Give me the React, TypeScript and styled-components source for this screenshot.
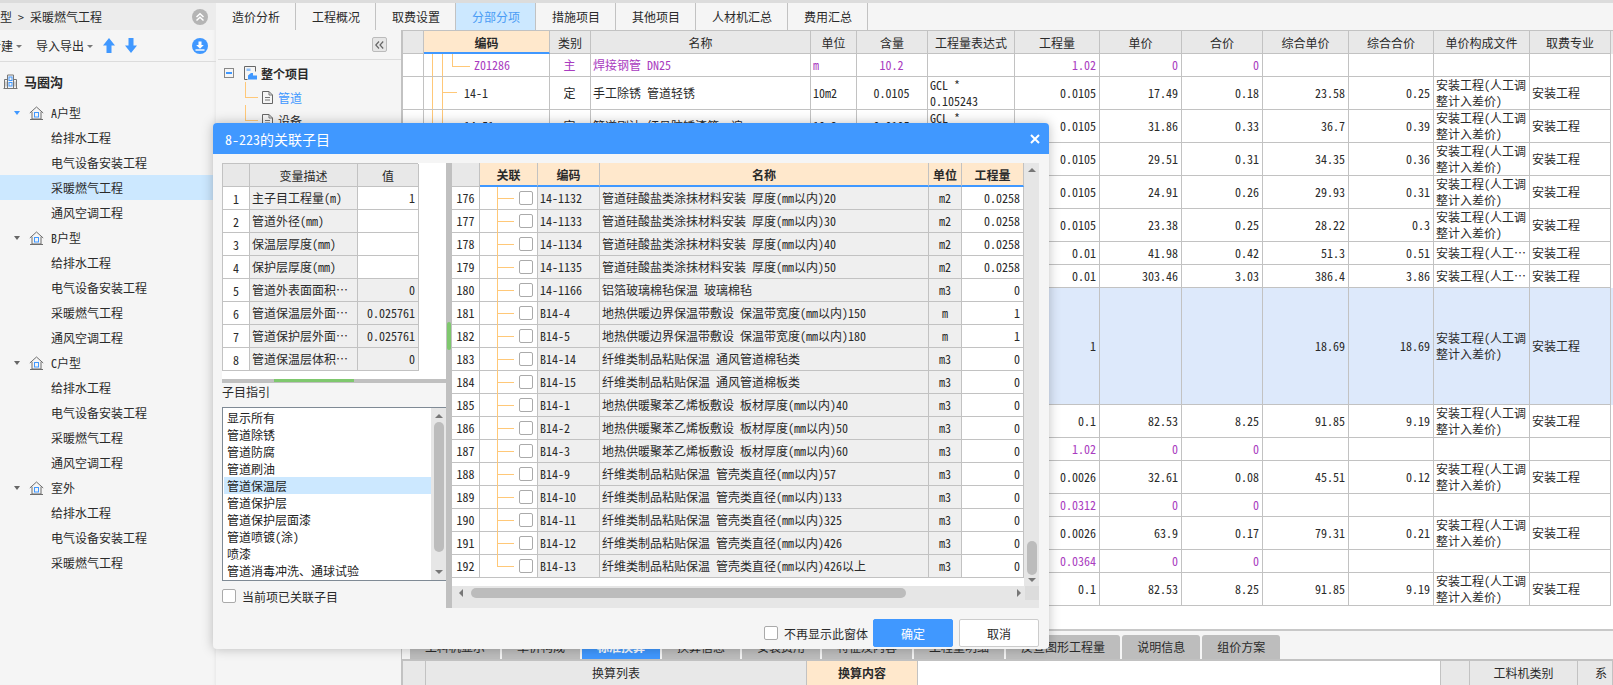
import React from "react"
import styled, { createGlobalStyle } from "styled-components"

const LINE = "#c2c2c2"
const HEAD = "#e8e8e8"
const ORANGE = "#ffe8cc"
const BLUE = "#4098ff"
const GUIDE = "#ffc878"
const PURPLE = "#a93cc0"
const FILE = "安装工程(人工调整计入差价)"
const MAJOR = "安装工程"

const GRID_COLUMNS = "21px 126px 41px 220px 46px 71px 87px 85px 82px 81px 86px 85px 96px 81px"
const VAR_COLUMNS = "27px 108px 61px"
const LINK_COLUMNS = "28px 58px 62px 329px 33px 62px"

const GlobalStyle = createGlobalStyle`
	html, body {
		margin: 0;
		padding: 0;
		background: #f5f5f5;
	}
	body {
		font-family: "Noto Sans CJK SC", "Liberation Sans", sans-serif;
		font-size: 12px;
		font-feature-settings: "hwid";
		color: #2a2a2a;
	}
	* {
		box-sizing: border-box;
	}
`

type GridRow = {
	height: number
	depth?: number
	code?: string
	kind?: string
	name?: string
	unit?: string
	content?: string
	expression?: string
	quantity?: string
	price?: string
	total?: string
	unitAll?: string
	totalAll?: string
	file?: string
	major?: string
	material?: boolean
	active?: boolean
	clip?: boolean
}

const fee = (quantity: string, price: string, total: string, unitAll: string, totalAll: string) => ({
	quantity,
	price,
	total,
	unitAll,
	totalAll,
	file: FILE,
	major: MAJOR
})

const GRID_ROWS: GridRow[] = [
	{ height: 23, depth: 3, code: "Z01286", kind: "主", name: "焊接钢管 DN25", unit: "m", content: "10.2", quantity: "1.02", price: "0", total: "0", material: true },
	{ height: 33, depth: 2, code: "14-1", kind: "定", name: "手工除锈 管道轻锈", unit: "10m2", content: "0.0105", expression: "GCL * 0.105243", ...fee("0.0105", "17.49", "0.18", "23.58", "0.25") },
	{ height: 33, depth: 2, code: "14-51", kind: "定", name: "管道刷油 红丹防锈漆第一遍", unit: "10m2", content: "0.0105", expression: "GCL * 0.105243", ...fee("0.0105", "31.86", "0.33", "36.7", "0.39") },
	{ height: 33, ...fee("0.0105", "29.51", "0.31", "34.35", "0.36") },
	{ height: 33, ...fee("0.0105", "24.91", "0.26", "29.93", "0.31") },
	{ height: 33, ...fee("0.0105", "23.38", "0.25", "28.22", "0.3") },
	{ height: 23, clip: true, ...fee("0.01", "41.98", "0.42", "51.3", "0.51") },
	{ height: 23, clip: true, ...fee("0.01", "303.46", "3.03", "386.4", "3.86") },
	{ height: 117, active: true, ...fee("1", "", "", "18.69", "18.69") },
	{ height: 33, ...fee("0.1", "82.53", "8.25", "91.85", "9.19") },
	{ height: 23, quantity: "1.02", price: "0", total: "0", material: true },
	{ height: 33, ...fee("0.0026", "32.61", "0.08", "45.51", "0.12") },
	{ height: 23, quantity: "0.0312", price: "0", total: "0", material: true },
	{ height: 33, ...fee("0.0026", "63.9", "0.17", "79.31", "0.21") },
	{ height: 23, quantity: "0.0364", price: "0", total: "0", material: true },
	{ height: 33, ...fee("0.1", "82.53", "8.25", "91.85", "9.19") }
]

const GRID_HEADS = ["", "编码", "类别", "名称", "单位", "含量", "工程量表达式", "工程量", "单价", "合价", "综合单价", "综合合价", "单价构成文件", "取费专业"]

const VAR_ROWS = [
	["主子目工程量(m)", "1"],
	["管道外径(mm)", ""],
	["保温层厚度(mm)", ""],
	["保护层厚度(mm)", ""],
	["管道外表面面积…", "0"],
	["管道保温层外面…", "0.025761"],
	["管道保护层外面…", "0.025761"],
	["管道保温层体积…", "0"]
]

const LINK_ROWS = [
	["176", "14-1132", "管道硅酸盐类涂抹材料安装 厚度(mm以内)20", "m2", "0.0258"],
	["177", "14-1133", "管道硅酸盐类涂抹材料安装 厚度(mm以内)30", "m2", "0.0258"],
	["178", "14-1134", "管道硅酸盐类涂抹材料安装 厚度(mm以内)40", "m2", "0.0258"],
	["179", "14-1135", "管道硅酸盐类涂抹材料安装 厚度(mm以内)50", "m2", "0.0258"],
	["180", "14-1166", "铝箔玻璃棉毡保温 玻璃棉毡", "m3", "0"],
	["181", "B14-4", "地热供暖边界保温带敷设 保温带宽度(mm以内)150", "m", "1"],
	["182", "B14-5", "地热供暖边界保温带敷设 保温带宽度(mm以内)180", "m", "1"],
	["183", "B14-14", "纤维类制品粘贴保温 通风管道棉毡类", "m3", "0"],
	["184", "B14-15", "纤维类制品粘贴保温 通风管道棉板类", "m3", "0"],
	["185", "B14-1", "地热供暖聚苯乙烯板敷设 板材厚度(mm以内)40", "m3", "0"],
	["186", "B14-2", "地热供暖聚苯乙烯板敷设 板材厚度(mm以内)50", "m3", "0"],
	["187", "B14-3", "地热供暖聚苯乙烯板敷设 板材厚度(mm以内)60", "m3", "0"],
	["188", "B14-9", "纤维类制品粘贴保温 管壳类直径(mm以内)57", "m3", "0"],
	["189", "B14-10", "纤维类制品粘贴保温 管壳类直径(mm以内)133", "m3", "0"],
	["190", "B14-11", "纤维类制品粘贴保温 管壳类直径(mm以内)325", "m3", "0"],
	["191", "B14-12", "纤维类制品粘贴保温 管壳类直径(mm以内)426", "m3", "0"],
	["192", "B14-13", "纤维类制品粘贴保温 管壳类直径(mm以内)426以上", "m3", "0"]
]

const INDEX_ITEMS = ["显示所有", "管道除锈", "管道防腐", "管道刷油", "管道保温层", "管道保护层", "管道保护层面漆", "管道喷镀(涂)", "喷漆", "管道消毒冲洗、通球试验"]

const TREE = [
	{ name: "A户型", open: true, children: ["给排水工程", "电气设备安装工程", "采暖燃气工程", "通风空调工程"] },
	{ name: "B户型", children: ["给排水工程", "电气设备安装工程", "采暖燃气工程", "通风空调工程"] },
	{ name: "C户型", children: ["给排水工程", "电气设备安装工程", "采暖燃气工程", "通风空调工程"] },
	{ name: "室外", children: ["给排水工程", "电气设备安装工程", "采暖燃气工程"] }
]

const TOP_TABS = ["造价分析", "工程概况", "取费设置", "分部分项", "措施项目", "其他项目", "人材机汇总", "费用汇总"]
const BOTTOM_TABS = ["工料机显示", "单价构成", "标准换算", "换算信息", "安装费用", "特征及内容", "工程量明细", "反查图形工程量", "说明信息", "组价方案"]

function House() {
	return (
		<svg width="15" height="14" viewBox="0 0 15 14" fill="none">
			<path d="M.8 7 7.5 1l6.7 6M3 5.800V13h9V5.800" stroke="#6d6d6d" />
			<path d="M1 13.500h13" stroke="#6d6d6d" />
			<rect x="5.500" y="6.500" width="4" height="4.500" stroke={BLUE} />
		</svg>
	)
}

function Building() {
	return (
		<svg width="15" height="15" viewBox="0 0 15 15" fill="none">
			<path d="M4.500 14V1h6v13M4.500 5.500h-3V14M10.500 5.500h3V14M.5 14.500h14" stroke="#777" />
			<path d="M3 7.500v5M12 7.500v5" stroke="#aaa" />
			<rect x="6" y="3" width="3" height="3.500" stroke={BLUE} />
			<rect x="6" y="8.500" width="3" height="3.500" stroke={BLUE} />
		</svg>
	)
}

function Doc() {
	return (
		<svg width="11" height="13" viewBox="0 0 11 13" fill="none">
			<path d="M.5.500h6.500l3.500 3.500v8.500H.5z" stroke="#666" />
			<path d="M7 .5V4h3.500M3 6.500h5M3 9h5" stroke="#777" />
		</svg>
	)
}

function ProjectIcon() {
	return (
		<svg width="13" height="14" viewBox="0 0 13 14" fill="none">
			<path d="M.5 13.500V.5h11v5M.5 13.500h3" stroke="#666" />
			<rect x="2.500" y="2.500" width="4" height="2.500" fill="#8fc0f8" />
			<path d="M4 13.500V9.500l3-2.500h2v2.500h4v4z" fill={BLUE} />
		</svg>
	)
}

function RoundCollapse() {
	return (
		<svg width="16" height="16" viewBox="0 0 16 16" fill="none">
			<circle cx="8" cy="8" r="8" fill="#b4b4b4" />
			<path d="M4.500 8 8 4.700 11.500 8M4.500 11.500 8 8.200l3.500 3.300" stroke="#fff" strokeWidth="1.500" />
		</svg>
	)
}

function RoundDownload() {
	return (
		<svg width="16" height="16" viewBox="0 0 16 16" fill="none">
			<circle cx="8" cy="8" r="8" fill={BLUE} />
			<path d="M6.500 3.500h3v3.500h2.300L8 10.700 4.200 7h2.300z" fill="#fff" />
			<path d="M3.500 12h9" stroke="#fff" strokeWidth="1.400" />
		</svg>
	)
}

function MoveArrow({ down }: { down?: boolean }) {
	return (
		<svg width="12" height="15" viewBox="0 0 12 15" style={down ? { transform: "rotate(180deg)" } : undefined}>
			<path d="M6 0 12 7.500H8.500V15h-5V7.500H0z" fill={BLUE} />
		</svg>
	)
}

function DoubleLeft() {
	return (
		<svg width="9" height="8" viewBox="0 0 9 8" fill="none">
			<path d="M4 .5.800 4 4 7.500M8.200.5 5 4l3.200 3.500" stroke="#666" strokeWidth="1.200" />
		</svg>
	)
}

function CloseIcon() {
	return (
		<svg width="10" height="10" viewBox="0 0 10 10" fill="none">
			<path d="M1 1l8 8M9 1 1 9" stroke="#fff" strokeWidth="2" />
		</svg>
	)
}

export default function App() {
	return (
		<>
			<GlobalStyle />
			<Page>
				<Sidebar />
				<Main>
					<TabBar>
						{TOP_TABS.map(tab => (
							<TopTab key={tab} $active={tab === "分部分项"}>
								{tab}
							</TopTab>
						))}
					</TabBar>
					<Body>
						<ProjectPanel />
						<Workspace>
							<DataGrid />
							<TabStrip>
								{BOTTOM_TABS.map(tab => (
									<BottomTab key={tab} $active={tab === "标准换算"}>
										{tab}
									</BottomTab>
								))}
							</TabStrip>
							<DetailHeader>
								<DetailCorner />
								<DetailTitle>换算列表</DetailTitle>
								<DetailActive>换算内容</DetailActive>
								<DetailBlank />
								<DetailCorner />
								<DetailTitle>工料机类别</DetailTitle>
								<DetailClipped>系</DetailClipped>
							</DetailHeader>
						</Workspace>
					</Body>
				</Main>
				<LinkDialog />
			</Page>
		</>
	)
}

function Sidebar() {
	return (
		<Side>
			<Crumb>
				<CrumbText>户型 &gt; 采暖燃气工程</CrumbText>
				<RoundCollapse />
			</Crumb>
			<SideTools>
				<ClippedTool>新建</ClippedTool>
				<Caret />
				<ToolLabel>导入导出</ToolLabel>
				<Caret />
				<MoveGroup>
					<MoveArrow />
					<MoveArrow down />
				</MoveGroup>
				<ToolEnd>
					<RoundDownload />
				</ToolEnd>
			</SideTools>
			<TreeRoot>
				<Building />
				<RootName>马圈沟</RootName>
			</TreeRoot>
			{TREE.map(group => (
				<div key={group.name}>
					<GroupRow>
						<Triangle $blue={group.open} />
						<House />
						<GroupName>{group.name}</GroupName>
					</GroupRow>
					{group.children.map(child => (
						<LeafRow key={child} $active={group.open && child === "采暖燃气工程"}>
							{child}
						</LeafRow>
					))}
				</div>
			))}
		</Side>
	)
}

function ProjectPanel() {
	return (
		<Panel>
			<PanelTool>
				<CollapseButton>
					<DoubleLeft />
				</CollapseButton>
			</PanelTool>
			<ProjectRoot>
				<MinusBox />
				<ProjectIcon />
				<strong>整个项目</strong>
			</ProjectRoot>
			<ProjectLeaf $active>
				<LeafGuide />
				<Doc />
				管道
			</ProjectLeaf>
			<ProjectLeaf>
				<LeafGuide />
				<Doc />
				设备
			</ProjectLeaf>
		</Panel>
	)
}

function DataGrid() {
	return (
		<GridWrap>
			<GridLine $height={23} $head>
				{GRID_HEADS.map((head, i) => (
					<HeadCell key={head + i} $current={i === 1}>
						{head}
					</HeadCell>
				))}
			</GridLine>
			{GRID_ROWS.map((row, i) => (
				<GridLine key={i} $height={row.height} $active={row.active} $material={row.material}>
					<Cell />
					<CodeCell>
						{row.depth && <TreeBars />}
						{row.depth === 3 && <BranchDeep />}
						{row.depth === 2 && <BranchFlat />}
						<CodeText $left={row.depth === 3 ? 50 : 40}>{row.code}</CodeText>
					</CodeCell>
					<Cell $center>{row.kind}</Cell>
					<Cell>{row.name}</Cell>
					<Cell>{row.unit}</Cell>
					<Cell $center>{row.content}</Cell>
					<Cell>{row.expression}</Cell>
					<Cell $right>{row.quantity}</Cell>
					<Cell $right>{row.price}</Cell>
					<Cell $right>{row.total}</Cell>
					<Cell $right>{row.unitAll}</Cell>
					<Cell $right>{row.totalAll}</Cell>
					<Cell $clip={row.clip} $tight>
						{row.file}
					</Cell>
					<Cell>{row.major}</Cell>
				</GridLine>
			))}
		</GridWrap>
	)
}

function LinkDialog() {
	return (
		<Dialog>
			<DialogTitle>
				<span>8-223的关联子目</span>
				<CloseIcon />
			</DialogTitle>
			<DialogBody>
				<LeftColumn>
					<VarPanel>
						<VarLine $head>
							<VarHead />
							<VarHead>变量描述</VarHead>
							<VarHead>值</VarHead>
						</VarLine>
						{VAR_ROWS.map(([label, value], i) => (
							<VarLine key={label}>
								<VarIndex>{i + 1}</VarIndex>
								<VarLabel>{label}</VarLabel>
								<VarValue $grey={i > 3}>{value}</VarValue>
							</VarLine>
						))}
					</VarPanel>
					<HSplit>
						<GreenBar />
					</HSplit>
					<IndexLabel>子目指引</IndexLabel>
					<IndexBox>
						<IndexList>
							{INDEX_ITEMS.map(item => (
								<IndexItem key={item} $active={item === "管道保温层"}>
									{item}
								</IndexItem>
							))}
						</IndexList>
						<IndexScroll>
							<ScrollArrow $dir="up" />
							<IndexThumb />
							<ScrollArrow $dir="down" />
						</IndexScroll>
					</IndexBox>
					<CheckLine>
						<Check />
						当前项已关联子目
					</CheckLine>
				</LeftColumn>
				<VSplit>
					<GreenGrip />
				</VSplit>
				<RightColumn>
					<LinkTop>
						<LinkTable>
							<LinkLine $head>
								<LinkHead $plain />
								<LinkHead>关联</LinkHead>
								<LinkHead>编码</LinkHead>
								<LinkHead>名称</LinkHead>
								<LinkHead>单位</LinkHead>
								<LinkHead>工程量</LinkHead>
							</LinkLine>
							{LINK_ROWS.map(([no, code, name, unit, value], i) => (
								<LinkLine key={no}>
									<LinkCell $center $white>
										{no}
									</LinkCell>
									<LinkCheckCell $last={i === LINK_ROWS.length - 1}>
										<Check />
									</LinkCheckCell>
									<LinkCell>{code}</LinkCell>
									<LinkCell>{name}</LinkCell>
									<LinkCell $center>{unit}</LinkCell>
									<LinkCell $right $white>
										{value}
									</LinkCell>
								</LinkLine>
							))}
						</LinkTable>
						<VScroll>
							<ScrollArrow $dir="up" />
							<VThumb />
							<ScrollArrow $dir="down" />
						</VScroll>
					</LinkTop>
					<HScroll>
						<ScrollArrow $dir="left" />
						<HThumb />
						<ScrollArrow $dir="right" />
						<ScrollCorner />
					</HScroll>
				</RightColumn>
			</DialogBody>
			<DialogFooter>
				<FooterCheck>
					<Check />
					不再显示此窗体
				</FooterCheck>
				<PrimaryButton>确定</PrimaryButton>
				<PlainButton>取消</PlainButton>
			</DialogFooter>
		</Dialog>
	)
}

const Page = styled.div`
	position: relative;
	display: flex;
	width: 1613px;
	height: 685px;
	overflow: hidden;
	background: #f5f5f5;
`

const Side = styled.aside`
	flex: 0 0 216px;
	border-top: 3px solid #dcdcdc;
	box-shadow: inset -3px 0 3px -2px #e6e6e6;
`

const Crumb = styled.div`
	display: flex;
	align-items: center;
	height: 27px;
	padding-right: 8px;
	background: #ececec;
`

const CrumbText = styled.div`
	flex: 1;
	margin-left: -12px;
	white-space: pre;
`

const SideTools = styled.div`
	display: flex;
	align-items: center;
	height: 32px;
	padding-right: 8px;
	border-bottom: 1px solid #dcdcdc;
`

const ClippedTool = styled.span`
	margin-left: -11px;
`

const ToolLabel = styled.span`
	margin-left: 14px;
`

const Caret = styled.i`
	width: 0;
	height: 0;
	margin: 2px 0 0 3px;
	border: 3px solid transparent;
	border-top: 3px solid #777;
	border-bottom: 0;
`

const MoveGroup = styled.div`
	display: flex;
	gap: 10px;
	margin-left: 10px;
`

const ToolEnd = styled.div`
	display: flex;
	margin-left: auto;
`

const TreeRoot = styled.div`
	display: flex;
	align-items: center;
	gap: 6px;
	height: 38px;
	padding-left: 3px;
`

const RootName = styled.strong`
	font-size: 13px;
`

const GroupRow = styled.div`
	display: flex;
	align-items: center;
	height: 25px;
	padding-left: 14px;
	gap: 9px;
`

const GroupName = styled.span`
	margin-left: -2px;
`

const Triangle = styled.i<{ $blue?: boolean }>`
	width: 0;
	height: 0;
	border: 3.500px solid transparent;
	border-top: 4px solid ${p => (p.$blue ? BLUE : "#666")};
	border-bottom: 0;
`

const LeafRow = styled.div<{ $active?: boolean }>`
	height: 25px;
	padding-left: 51px;
	line-height: 25px;
	background: ${p => (p.$active ? "#cce8ff" : "transparent")};
`

const Main = styled.main`
	flex: 1;
	display: flex;
	flex-direction: column;
	min-width: 0;
`

const TabBar = styled.nav`
	display: flex;
	flex: 0 0 30px;
	border-top: 3px solid #dcdcdc;
	background: #f5f5f5;
`

const TopTab = styled.div<{ $active?: boolean }>`
	padding: 0 15px 0 16px;
	line-height: 27px;
	border-right: 1px solid ${LINE};
	background: ${p => (p.$active ? "#cce8ff" : "#f5f5f5")};
	color: ${p => (p.$active ? "#4a9cf5" : "#2a2a2a")};
`

const Body = styled.div`
	flex: 1;
	display: flex;
	min-height: 0;
`

const Panel = styled.section`
	flex: 0 0 186px;
	border-right: 1px solid ${LINE};
`

const PanelTool = styled.div`
	display: flex;
	justify-content: flex-end;
	height: 30px;
	margin-left: 2px;
	padding: 7px 14px 0 0;
	border-bottom: 1px solid #dcdcdc;
`

const CollapseButton = styled.div`
	display: flex;
	align-items: center;
	justify-content: center;
	width: 15px;
	height: 15px;
	border: 1px solid #bbb;
	border-radius: 2px;
	background: #e6e6e6;
`

const ProjectRoot = styled.div`
	display: flex;
	align-items: center;
	height: 26px;
	padding-left: 8px;
	gap: 10px;
	strong {
		margin-left: -6px;
	}
`

const MinusBox = styled.i`
	position: relative;
	width: 10px;
	height: 10px;
	border: 1px solid #888;
	&::after {
		content: "";
		position: absolute;
		left: 1px;
		top: 3px;
		width: 6px;
		height: 2px;
		background: ${BLUE};
	}
`

const ProjectLeaf = styled.div<{ $active?: boolean }>`
	position: relative;
	display: flex;
	align-items: center;
	gap: 5px;
	height: 23px;
	padding-left: 46px;
	color: ${p => (p.$active ? BLUE : "#2a2a2a")};
`

const LeafGuide = styled.i`
	position: absolute;
	left: 29px;
	top: -4px;
	width: 13px;
	height: 16px;
	border-left: 1px solid ${GUIDE};
	border-bottom: 1px solid ${GUIDE};
`

const Workspace = styled.section`
	flex: 1;
	display: flex;
	flex-direction: column;
	min-width: 0;
`

const GridWrap = styled.div`
	flex: 0 0 601px;
	border-top: 1px solid ${LINE};
	border-bottom: 2px solid #c8c8c8;
	background: #fff;
`

const GridLine = styled.div<{ $height: number; $head?: boolean; $active?: boolean; $material?: boolean }>`
	display: grid;
	grid-template-columns: ${GRID_COLUMNS};
	height: ${p => p.$height}px;
	background: ${p => (p.$active ? "#dde9fb" : p.$head ? HEAD : "#fff")};
	color: ${p => (p.$material ? PURPLE : "#2a2a2a")};
	border-left: 1px solid ${LINE};
`

const Cell = styled.div<{ $center?: boolean; $right?: boolean; $clip?: boolean; $tight?: boolean }>`
	display: ${p => (p.$clip ? "block" : "flex")};
	align-items: center;
	justify-content: ${p => (p.$center ? "center" : p.$right ? "flex-end" : "flex-start")};
	padding: 0 ${p => (p.$tight ? 1 : 3)}px 0 2px;
	border-right: 1px solid ${LINE};
	border-bottom: 1px solid ${LINE};
	line-height: ${p => (p.$clip ? "22px" : "16px")};
	white-space: ${p => (p.$clip ? "nowrap" : "pre-wrap")};
	overflow: hidden;
	text-overflow: ${p => (p.$clip ? "ellipsis" : "clip")};
`

const HeadCell = styled.div<{ $current?: boolean }>`
	display: flex;
	align-items: center;
	justify-content: center;
	padding-top: 1px;
	border-right: 1px solid ${LINE};
	border-bottom: ${p => (p.$current ? `2px solid ${BLUE}` : `1px solid ${LINE}`)};
	background: ${p => (p.$current ? ORANGE : HEAD)};
	font-weight: ${p => (p.$current ? 700 : 400)};
`

const CodeCell = styled(Cell)`
	position: relative;
	padding: 0;
`

const TreeBars = styled.i`
	position: absolute;
	left: 8px;
	top: 0;
	bottom: -1px;
	width: 11px;
	border-left: 1px solid ${GUIDE};
	border-right: 1px solid ${GUIDE};
`

const BranchDeep = styled.i`
	position: absolute;
	left: 28px;
	top: 0;
	width: 18px;
	height: 13px;
	border-left: 1px solid ${GUIDE};
	border-bottom: 1px solid ${GUIDE};
`

const BranchFlat = styled.i`
	position: absolute;
	left: 18px;
	top: 15px;
	width: 15px;
	height: 1px;
	background: ${GUIDE};
`

const CodeText = styled.span<{ $left: number }>`
	padding-left: ${p => p.$left}px;
`

const TabStrip = styled.div`
	display: flex;
	flex: 0 0 30px;
	gap: 2px;
	padding: 4px 0 0 8px;
	border-bottom: 2px solid ${LINE};
`

const BottomTab = styled.div<{ $active?: boolean }>`
	padding: 0 15px;
	line-height: 24px;
	border-radius: 3px 3px 0 0;
	background: ${p => (p.$active ? BLUE : "#bdbdbd")};
	color: ${p => (p.$active ? "#fff" : "#2a2a2a")};
	font-weight: ${p => (p.$active ? 700 : 400)};
`

const DetailHeader = styled.div`
	display: grid;
	grid-template-columns: 24px 381px 111px 522px 30px 108px 1fr;
	flex: 1;
	background: #fff;
`

const DetailCorner = styled.div`
	background: ${HEAD};
	border-left: 1px solid ${LINE};
	border-right: 1px solid ${LINE};
`

const DetailTitle = styled.div`
	padding-top: 3px;
	text-align: center;
	background: ${HEAD};
	border-right: 1px solid ${LINE};
`

const DetailActive = styled(DetailTitle)`
	background: ${ORANGE};
	font-weight: 700;
`

const DetailClipped = styled(DetailTitle)`
	padding-left: 17px;
	text-align: left;
`

const DetailBlank = styled.div``

const Dialog = styled.div`
	position: absolute;
	left: 213px;
	top: 123px;
	display: flex;
	flex-direction: column;
	width: 836px;
	height: 526px;
	border-radius: 4px;
	overflow: hidden;
	background: #f5f5f5;
	box-shadow: 0 0 12px rgba(0, 0, 0, 0.25);
`

const DialogTitle = styled.header`
	display: flex;
	align-items: center;
	justify-content: space-between;
	flex: 0 0 31px;
	padding: 0 9px 0 12px;
	background: ${BLUE};
	color: #fff;
	font-size: 14px;
`

const DialogBody = styled.div`
	display: flex;
	padding: 9px 10px 0 9px;
`

const LeftColumn = styled.div`
	flex: 0 0 225px;
`

const VarPanel = styled.div`
	height: 216px;
	background: #fff;
`

const VarLine = styled.div<{ $head?: boolean }>`
	display: grid;
	grid-template-columns: ${VAR_COLUMNS};
	width: 196px;
	height: ${p => (p.$head ? 24 : 23)}px;
	border-left: 1px solid ${LINE};
	border-top: ${p => (p.$head ? `1px solid ${LINE}` : "0")};
`

const VarHead = styled.div`
	display: flex;
	align-items: center;
	justify-content: center;
	background: ${HEAD};
	border-right: 1px solid ${LINE};
	border-bottom: 1px solid ${LINE};
`

const VarIndex = styled(VarHead)`
	background: #fff;
`

const VarLabel = styled.div`
	padding-left: 2px;
	line-height: 22px;
	background: #efefef;
	border-right: 1px solid ${LINE};
	border-bottom: 1px solid ${LINE};
	white-space: nowrap;
	overflow: hidden;
`

const VarValue = styled.div<{ $grey?: boolean }>`
	padding-right: 3px;
	line-height: 22px;
	text-align: right;
	background: ${p => (p.$grey ? "#efefef" : "#fff")};
	border-right: 1px solid ${LINE};
	border-bottom: 1px solid ${LINE};
`

const HSplit = styled.div`
	height: 4px;
	background: #c0c0c0;
`

const GreenBar = styled.div`
	width: 80px;
	height: 3px;
	margin-left: 52px;
	background: #7fc86e;
`

const IndexLabel = styled.div`
	height: 24px;
	line-height: 17px;
`

const IndexBox = styled.div`
	display: flex;
	height: 174px;
	border: 1px solid #7f8a95;
	background: #fff;
`

const IndexList = styled.div`
	flex: 1;
	padding: 1px 0 0 1px;
`

const IndexItem = styled.div<{ $active?: boolean }>`
	height: 17px;
	padding-left: 3px;
	line-height: 17px;
	white-space: nowrap;
	background: ${p => (p.$active ? "#cce8ff" : "transparent")};
	color: #222;
`

const IndexScroll = styled.div`
	display: flex;
	flex-direction: column;
	align-items: center;
	flex: 0 0 15px;
	padding: 6px 0;
	background: #e6e6e6;
`

const IndexThumb = styled.div`
	width: 10px;
	height: 130px;
	margin: 4px 0 auto;
	border-radius: 5px;
	background: #bcbcbc;
`

const CheckLine = styled.label`
	display: flex;
	align-items: center;
	gap: 6px;
	height: 27px;
	padding-top: 3px;
`

const Check = styled.i`
	display: block;
	flex: 0 0 14px;
	width: 14px;
	height: 14px;
	border: 1px solid #aaa;
	border-radius: 2px;
	background: #fff;
`

const VSplit = styled.div`
	flex: 0 0 6px;
	margin-left: -1px;
	padding-top: 159px;
	background: #c0c0c0;
`

const GreenGrip = styled.div`
	width: 4px;
	height: 28px;
	margin-left: 1px;
	border-radius: 2px;
	background: #7fc86e;
`

const RightColumn = styled.div`
	flex: 1;
	min-width: 0;
	background: #e6e6e6;
`

const LinkTop = styled.div`
	display: flex;
	height: 423px;
`

const LinkTable = styled.div`
	flex: 0 0 572px;
	background: #fff;
`

const LinkLine = styled.div<{ $head?: boolean }>`
	display: grid;
	grid-template-columns: ${LINK_COLUMNS};
	height: ${p => (p.$head ? 24 : 23)}px;
`

const LinkHead = styled.div<{ $plain?: boolean }>`
	display: flex;
	align-items: center;
	justify-content: center;
	background: ${p => (p.$plain ? HEAD : ORANGE)};
	font-weight: 700;
	border-right: 1px solid ${LINE};
	border-bottom: ${p => (p.$plain ? `1px solid ${LINE}` : `2px solid ${BLUE}`)};
`

const LinkCell = styled.div<{ $center?: boolean; $right?: boolean; $white?: boolean }>`
	padding: 0 ${p => (p.$right ? 3 : 2)}px;
	line-height: 22px;
	text-align: ${p => (p.$center ? "center" : p.$right ? "right" : "left")};
	white-space: pre;
	background: ${p => (p.$white ? "#fff" : "#efefef")};
	border-right: 1px solid ${LINE};
	border-bottom: 1px solid ${LINE};
	overflow: hidden;
`

const LinkCheckCell = styled.div<{ $last?: boolean }>`
	position: relative;
	display: flex;
	align-items: center;
	padding-left: 39px;
	background: #fff;
	border-right: 1px solid ${LINE};
	border-bottom: 1px solid ${LINE};
	&::before {
		content: "";
		position: absolute;
		left: 17px;
		top: 0;
		width: 17px;
		height: ${p => (p.$last ? "11px" : "23px")};
		border-left: 1px solid ${GUIDE};
	}
	&::after {
		content: "";
		position: absolute;
		left: 17px;
		top: 11px;
		width: 17px;
		height: 1px;
		background: ${GUIDE};
	}
`

const VScroll = styled.div`
	display: flex;
	flex-direction: column;
	align-items: center;
	flex: 1;
	padding: 5px 0 4px;
`

const VThumb = styled.div`
	width: 10px;
	height: 34px;
	margin: auto 0 3px;
	border-radius: 5px;
	background: #bcbcbc;
`

const HScroll = styled.div`
	display: flex;
	align-items: center;
	height: 14px;
	padding-left: 7px;
`

const HThumb = styled.div`
	width: 435px;
	height: 10px;
	margin: 0 auto 0 8px;
	border-radius: 5px;
	background: #bcbcbc;
`

const ScrollCorner = styled.div`
	flex: 0 0 14px;
	height: 14px;
	margin-left: 4px;
	background: #dcdcdc;
`

const ScrollArrow = styled.i<{ $dir: "up" | "down" | "left" | "right" }>`
	width: 0;
	height: 0;
	border: 4px solid transparent;
	${p =>
		p.$dir === "up"
			? "border-bottom: 4px solid #777; border-top: 0;"
			: p.$dir === "down"
				? "border-top: 4px solid #777; border-bottom: 0;"
				: p.$dir === "left"
					? "border-right: 4px solid #777; border-left: 0;"
					: "border-left: 4px solid #777; border-right: 0;"}
`

const DialogFooter = styled.footer`
	display: flex;
	align-items: center;
	justify-content: flex-end;
	gap: 6px;
	padding: 11px 10px 0 0;
`

const FooterCheck = styled.label`
	display: flex;
	align-items: center;
	gap: 6px;
	margin-right: -1px;
`

const PrimaryButton = styled.button`
	width: 80px;
	height: 28px;
	padding: 0;
	border: 1px solid ${BLUE};
	border-radius: 2px;
	background: ${BLUE};
	color: #fff;
	font: inherit;
`

const PlainButton = styled(PrimaryButton)`
	border-color: #ccc;
	background: #fff;
	color: #2a2a2a;
`
